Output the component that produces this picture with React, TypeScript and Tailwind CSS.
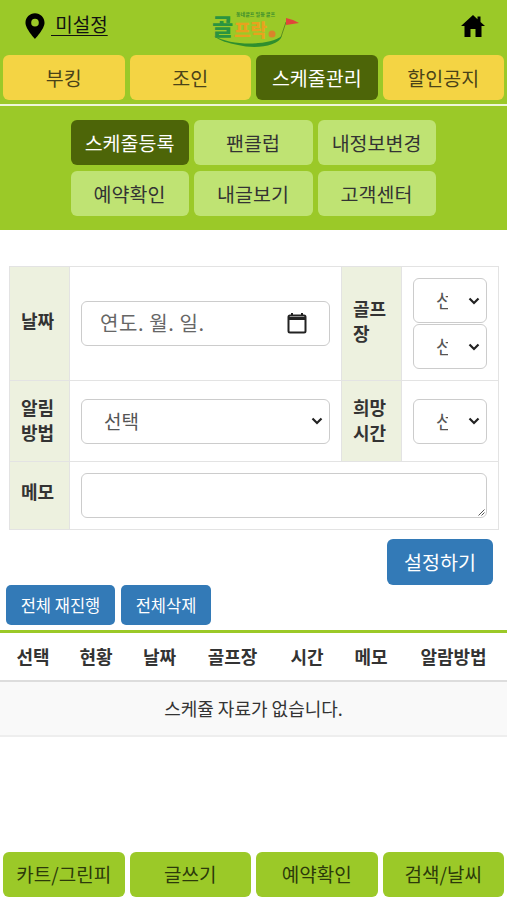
import React from "react";

const font = { fontFamily: '"Noto Sans CJK KR", "Noto Sans", sans-serif' };

function Chevron() {
  return (
    <svg width="12" height="8" viewBox="0 0 12 8" className="shrink-0">
      <path d="M1.5 1.5 L6 6 L10.5 1.5" fill="none" stroke="#222" strokeWidth="2.2" />
    </svg>
  );
}

function Sel({ label, wide, cls }: { label: string; wide?: boolean; cls?: string }) {
  return (
    <div
      className={`flex items-center justify-between bg-white border border-[#ccc] rounded-[6px] h-[45px] ${
        wide ? "w-full pl-[22px] pr-[6px] text-[19px]" : "w-[74px] pl-[22px] pr-[6px] text-[19px]"
      } text-[#555] ${cls ?? ""}`}
    >
      <span className={wide ? "" : "w-[12px] overflow-hidden whitespace-nowrap"}>{label}</span>
      <Chevron />
    </div>
  );
}

function Logo() {
  return (
    <svg width="90" height="40" viewBox="0 0 90 40" style={font} className="overflow-visible">
      <path d="M2 26 C20 36 56 36 70 26 C66 37 42 39 26 35 C16 33 8 31 2 26Z" fill="#2f8f2e" />
      <path d="M74 12 L69 27" stroke="#5f8f20" strokeWidth="1" />
      <path d="M74 8 L74 15 L87 13 L81 10 Z" fill="#e0463a" />
      <text x="0" y="25" fontSize="23" fontWeight="900" fill="#2a9440">골</text>
      <text x="22" y="27" fontSize="18" fontWeight="900" fill="#e8a21e">프락</text>
      <circle cx="60" cy="24" r="3.5" fill="#d9842b" />
      <text x="24" y="6" fontSize="5" fontWeight="700" fill="#3c8f2e">동네골프 일등 골프</text>
    </svg>
  );
}

function Tab({ label, active, green }: { label: string; active?: boolean; green?: boolean }) {
  return (
    <div
      className={`flex items-center justify-center h-[45px] rounded-[6px] ${
        active
          ? "bg-[#4d6508] text-white text-[19.5px]"
          : green
          ? "bg-[#9bc928] text-[#2c3a0a] text-[19px]"
          : "bg-[#f4d444] text-[#4a4318] text-[19.5px]"
      }`}
    >
      {label}
    </div>
  );
}

function Sub({ label, active }: { label: string; active?: boolean }) {
  return (
    <div
      className={`flex items-center justify-center h-[45px] rounded-[6px] text-[19.5px] ${
        active ? "bg-[#4d6508] text-white" : "bg-[#bfe373] text-[#333]"
      }`}
    >
      {label}
    </div>
  );
}

const th = "border border-[#e3e3e3] bg-[#edf1df] text-left align-middle px-[11px] text-[18px] leading-[25px] font-bold text-[#333]";
const td = "border border-[#e3e3e3] bg-white p-[11px] align-middle";

export default function App() {
  return (
    <div className="w-[507px] h-[900px] bg-white flex flex-col overflow-hidden" style={font}>
      <div className="bg-[#9bc928] h-[230px] flex flex-col shrink-0">
        <div className="h-[55px] flex items-center justify-between pl-[25px] pr-[21px] relative shrink-0">
          <div className="flex items-center gap-[6px] -mt-[3px]">
            <svg width="20" height="28" viewBox="0 0 21 28">
              <path
                fillRule="evenodd"
                d="M10.5 0.5C4.8 0.5 0.5 5 0.5 10.5C0.5 17 10.5 27.5 10.5 27.5S20.5 17 20.5 10.5C20.5 5 16.2 0.5 10.5 0.5ZM10.5 6.5a4 4 0 1 1 0 8a4 4 0 0 1 0-8Z"
                fill="#000"
              />
            </svg>
            <span className="text-[19px] leading-[24px] text-[#111] underline underline-offset-[3px] -mt-[5px] whitespace-pre"> 미설정</span>
          </div>
          <div className="absolute left-[212px] top-[10px]">
            <Logo />
          </div>
          <svg width="26" height="24" viewBox="0 0 26 24" className="-mt-[3px]">
            <path d="M13 1 L1 12 L4.5 12 L4.5 23 L10.5 23 L10.5 15 L15.5 15 L15.5 23 L21.5 23 L21.5 12 L25 12 L20.5 8 L20.5 2.5 L17.5 2.5 L17.5 5.2 Z" fill="#000" />
          </svg>
        </div>
        <div className="grid grid-cols-4 gap-[5px] px-[3px] shrink-0">
          <Tab label="부킹" />
          <Tab label="조인" />
          <Tab label="스케줄관리" active />
          <Tab label="할인공지" />
        </div>
        <div className="h-[2px] bg-[#eef6d8] mt-[4px] shrink-0" />
        <div className="grid grid-cols-[118px_119px_118px] gap-x-[5px] gap-y-[6px] justify-center mt-[14px] pr-[1px]">
          <Sub label="스케줄등록" active />
          <Sub label="팬클럽" />
          <Sub label="내정보변경" />
          <Sub label="예약확인" />
          <Sub label="내글보기" />
          <Sub label="고객센터" />
        </div>
      </div>

      <div className="px-[9px] pt-[36px] shrink-0">
        <table className="w-[489px] border-collapse table-fixed">
          <colgroup>
            <col className="w-[60px]" />
            <col className="w-[272px]" />
            <col className="w-[60px]" />
            <col className="w-[97px]" />
          </colgroup>
          <tbody>
            <tr className="h-[114px]">
              <th className={`${th} !align-top pt-[41px]`}>날짜</th>
              <td className={td}>
                <div className="flex items-center justify-between h-[45px] border border-[#ccc] rounded-[6px] pl-[18px] pr-[22px] text-[20px] text-[#666] -mt-[1px]">
                  <span className="tracking-[0.6px]">연도. 월. 일.</span>
                  <svg width="20" height="22" viewBox="0 0 20 22">
                    <path d="M5 1v3M15 1v3" stroke="#222" strokeWidth="2" />
                    <rect x="1.5" y="3.5" width="17" height="17" rx="1.5" fill="none" stroke="#222" strokeWidth="2" />
                    <path d="M1.5 5h17v3h-17z" fill="#222" />
                  </svg>
                </div>
              </td>
              <th className={th}>
                <div className="-mt-[6px]">골프</div>
                <div>장</div>
              </th>
              <td className={`${td} !py-0`}>
                <div className="flex flex-col gap-[1px]">
                  <Sel label="선택" />
                  <Sel label="선택" />
                </div>
              </td>
            </tr>
            <tr className="h-[81px]">
              <th className={th}>
                <div className="-mt-[3px]">
                  알림
                  <br />
                  방법
                </div>
              </th>
              <td className={td}>
                <Sel label="선택" wide />
              </td>
              <th className={th}>
                <div className="-mt-[3px]">
                  희망
                  <br />
                  시간
                </div>
              </th>
              <td className={td}>
                <Sel label="선택" />
              </td>
            </tr>
            <tr className="h-[68px]">
              <th className={`${th} !align-top pt-[17px]`}>메모</th>
              <td className={td} colSpan={3}>
                <div className="relative h-[45px] border border-[#ccc] rounded-[6px]">
                  <svg width="7" height="7" viewBox="0 0 7 7" className="absolute right-[1px] bottom-[1px]">
                    <path d="M6.5 0.5L0.5 6.5M6.5 3.5L3.5 6.5" stroke="#555" strokeWidth="1" />
                  </svg>
                </div>
              </td>
            </tr>
          </tbody>
        </table>
        <div className="flex justify-end pr-[5px] mt-[9px]">
          <div className="flex items-center justify-center w-[106px] h-[46px] rounded-[6px] bg-[#337ab7] text-white text-[19.5px]">
            설정하기
          </div>
        </div>
      </div>

      <div className="flex gap-[6px] pl-[6px] shrink-0">
        <div className="flex items-center justify-center w-[109px] h-[40px] rounded-[5px] bg-[#337ab7] text-white text-[16.5px]">
          전체 재진행
        </div>
        <div className="flex items-center justify-center w-[90px] h-[40px] rounded-[5px] bg-[#337ab7] text-white text-[16.5px]">
          전체삭제
        </div>
      </div>

      <div className="h-[3px] bg-[#9bc928] mt-[5px] shrink-0" />
      <div className="grid grid-cols-[66px_60px_67px_79px_70px_58px_107px] h-[47px] items-center text-center text-[18px] font-bold text-[#333] border-b-[2px] border-[#ddd] box-content shrink-0">
        <span>선택</span>
        <span>현황</span>
        <span>날짜</span>
        <span>골프장</span>
        <span>시간</span>
        <span>메모</span>
        <span>알람방법</span>
      </div>
      <div className="h-[53px] bg-[#f9f9f9] border-b-[2px] border-[#eee] box-content flex items-center justify-center text-[18px] text-[#333] shrink-0">
        스케쥴 자료가 없습니다.
      </div>

      <div className="flex-1" />
      <div className="grid grid-cols-4 gap-[5px] px-[3px] pb-[3px] shrink-0">
        <Tab label="카트/그린피" green />
        <Tab label="글쓰기" green />
        <Tab label="예약확인" green />
        <Tab label="검색/날씨" green />
      </div>
    </div>
  );
}
